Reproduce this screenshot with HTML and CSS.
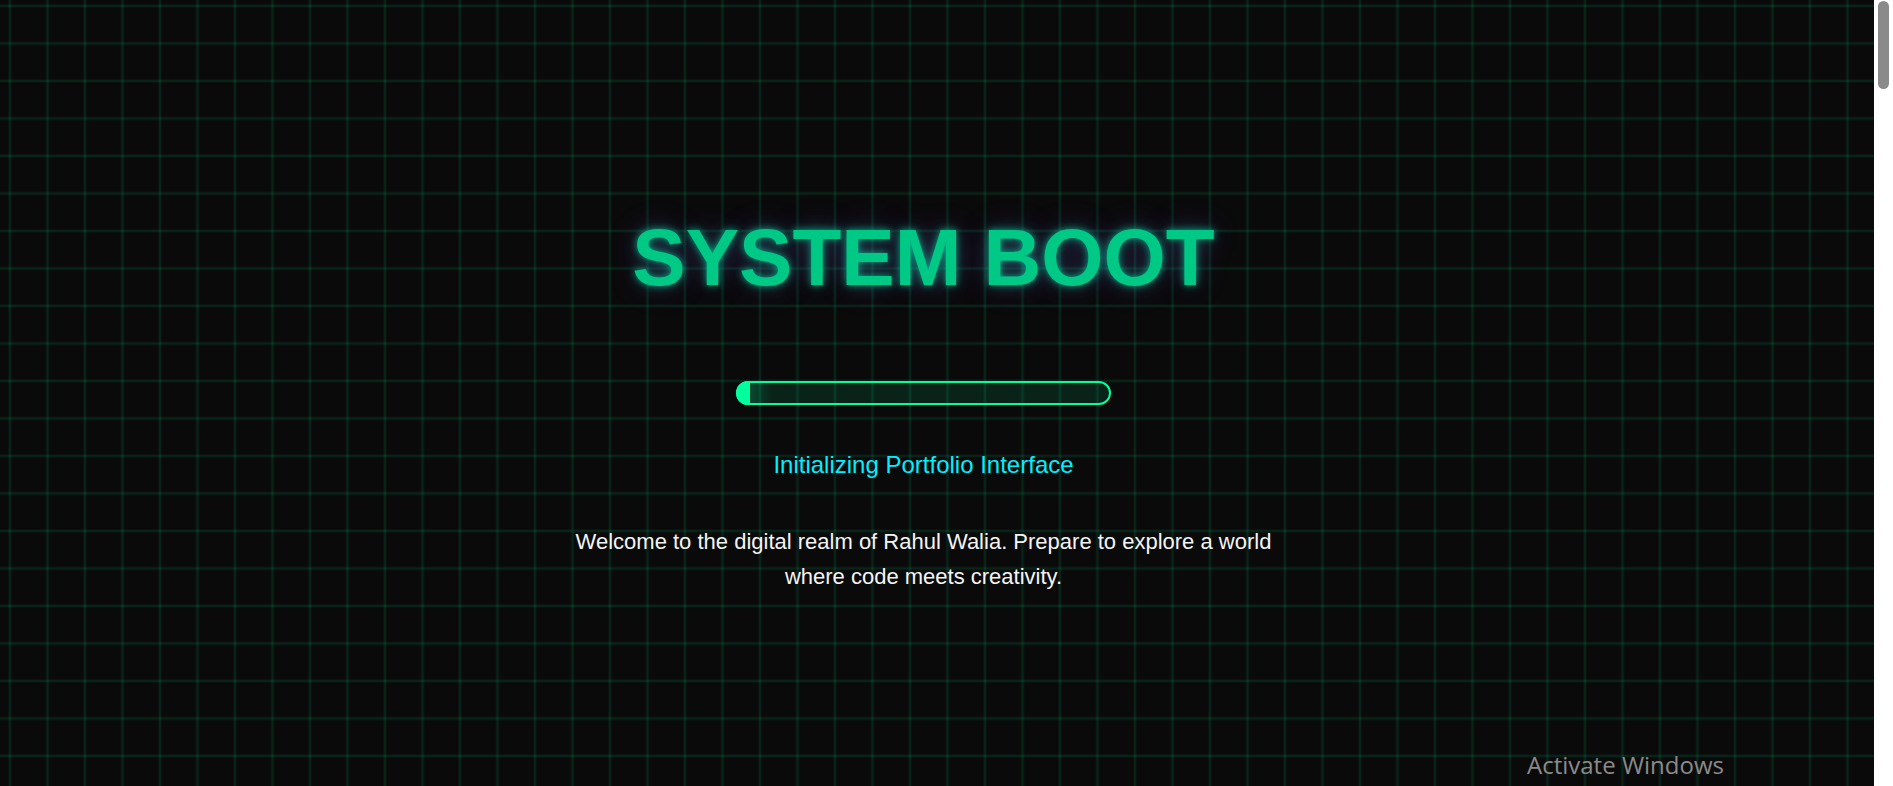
FILE: index.html
```html
<!DOCTYPE html>
<html lang="en">
<head>
<meta charset="utf-8">
<title>System Boot</title>
<link rel="stylesheet" href="styles.css">
</head>
<body>
<div class="page">
  <main class="screen">
    <h1 class="title">SYSTEM BOOT</h1>
    <div class="bar"><div class="bar-fill"></div></div>
    <p class="status">Initializing Portfolio Interface</p>
    <p class="welcome">Welcome to the digital realm of Rahul Walia. Prepare to explore a world where code meets creativity.</p>
  </main>
  <div class="scrollbar"><div class="thumb"></div></div>
</div>
<div class="watermark">Activate Windows</div>
</body>
</html>
```
FILE: styles.css
```css
html, body {
  margin: 0;
  padding: 0;
  background: #0a0a0a;
  overflow: hidden;
}

.page {
  display: flex;
  width: 1893px;
  height: 786px;
}

.screen {
  flex: 1;
  display: flex;
  flex-direction: column;
  align-items: center;
  padding: 212px 27px 0 0;
  box-sizing: border-box;
  background-color: #0a0a0a;
  background-image:
    linear-gradient(90deg, rgba(0, 255, 157, 0.035) 0 1px, rgba(0, 255, 157, 0.1) 1px 3px, rgba(0, 255, 157, 0.035) 3px 4px, transparent 4px),
    linear-gradient(180deg, rgba(0, 255, 157, 0.035) 0 1px, rgba(0, 255, 157, 0.1) 1px 3px, rgba(0, 255, 157, 0.035) 3px 4px, transparent 4px);
  background-size: 37.5px 37.5px;
  background-position: 8px 4px;
  font-family: "Liberation Sans", Arial, sans-serif;
}

.title {
  margin: 0;
  font-size: 80px;
  line-height: 92px;
  font-weight: 700;
  color: #00c985;
  text-shadow: 0 0 7px rgba(0, 255, 200, 0.6), 0 0 18px rgba(0, 255, 157, 0.2), 0 0 30px rgba(140, 60, 255, 0.3);
}

.bar {
  margin-top: 77px;
  width: 375px;
  height: 24px;
  box-sizing: border-box;
  border: 2px solid #00ff9d;
  border-radius: 12px;
  background: linear-gradient(90deg, rgba(0, 255, 157, 0.35) 0, rgba(0, 255, 157, 0.1) 34px);
  display: flex;
}

.bar-fill {
  width: 14px;
  height: 24px;
  margin: -2px 0 0 -2px;
  border-radius: 12px 0 0 12px;
  background: #00ff9d;
  flex: none;
}

.status {
  margin: 46px 0 0;
  font-size: 24px;
  line-height: 28px;
  color: #00f0ff;
}

.welcome {
  margin: 45px 0 0;
  max-width: 720px;
  font-size: 22px;
  line-height: 35.2px;
  color: #f4f4f4;
  text-align: center;
}

.scrollbar {
  width: 19px;
  background: #ffffff;
  padding: 1px 4px 0 4px;
  box-sizing: border-box;
}

.thumb {
  height: 88px;
  background: #8a8a8a;
  border-radius: 6px;
}

.watermark {
  position: absolute;
  left: 1527px;
  top: 748px;
  font-family: "Open Sans", sans-serif;
  font-size: 24px;
  color: #8a8a8a;
}
```
